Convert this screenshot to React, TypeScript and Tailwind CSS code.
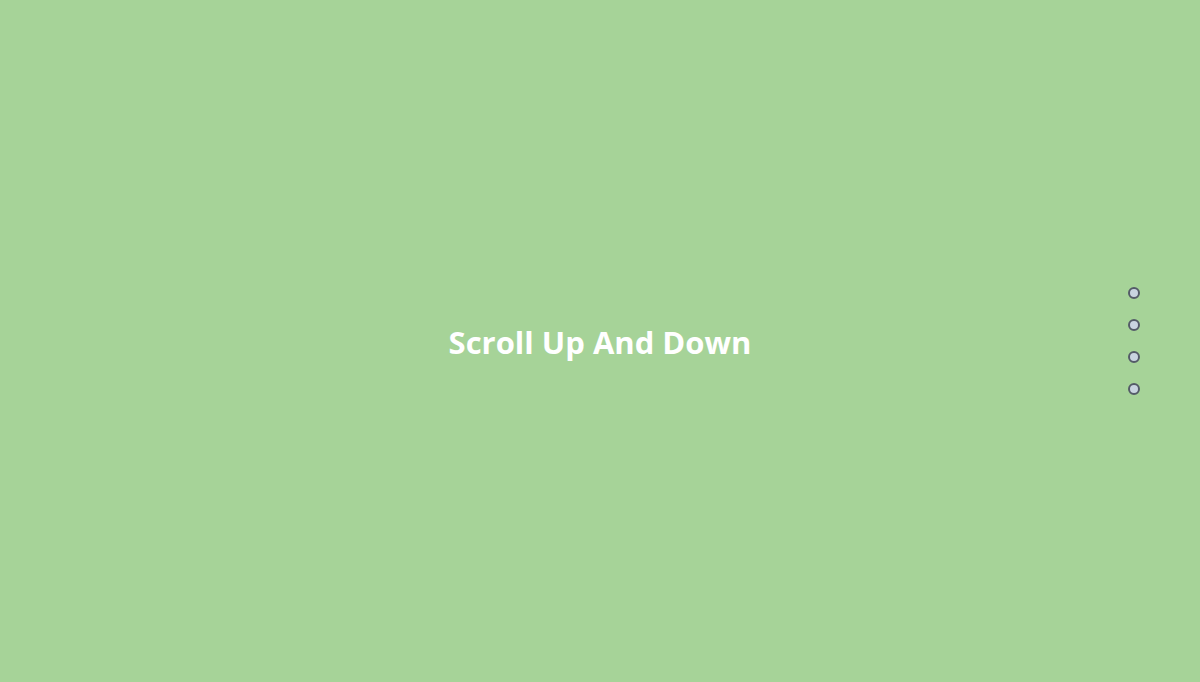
const sections = ["one", "two", "three", "four"];

export default function App() {
  return (
    <div className="relative flex h-[682px] w-full items-center justify-center overflow-hidden bg-[#a6d398]">
      <h1 className="pt-[2px] font-['Open_Sans',sans-serif] text-[31px] font-bold leading-none text-white">
        Scroll Up And Down
      </h1>

      <nav className="absolute right-[60px] top-1/2 flex -translate-y-1/2 flex-col gap-5">
        {sections.map((s) => (
          <button
            key={s}
            type="button"
            aria-label={s}
            className="size-3 rounded-full border-2 border-[#545b68] bg-[#c9d4e0]"
          />
        ))}
      </nav>
    </div>
  );
}
